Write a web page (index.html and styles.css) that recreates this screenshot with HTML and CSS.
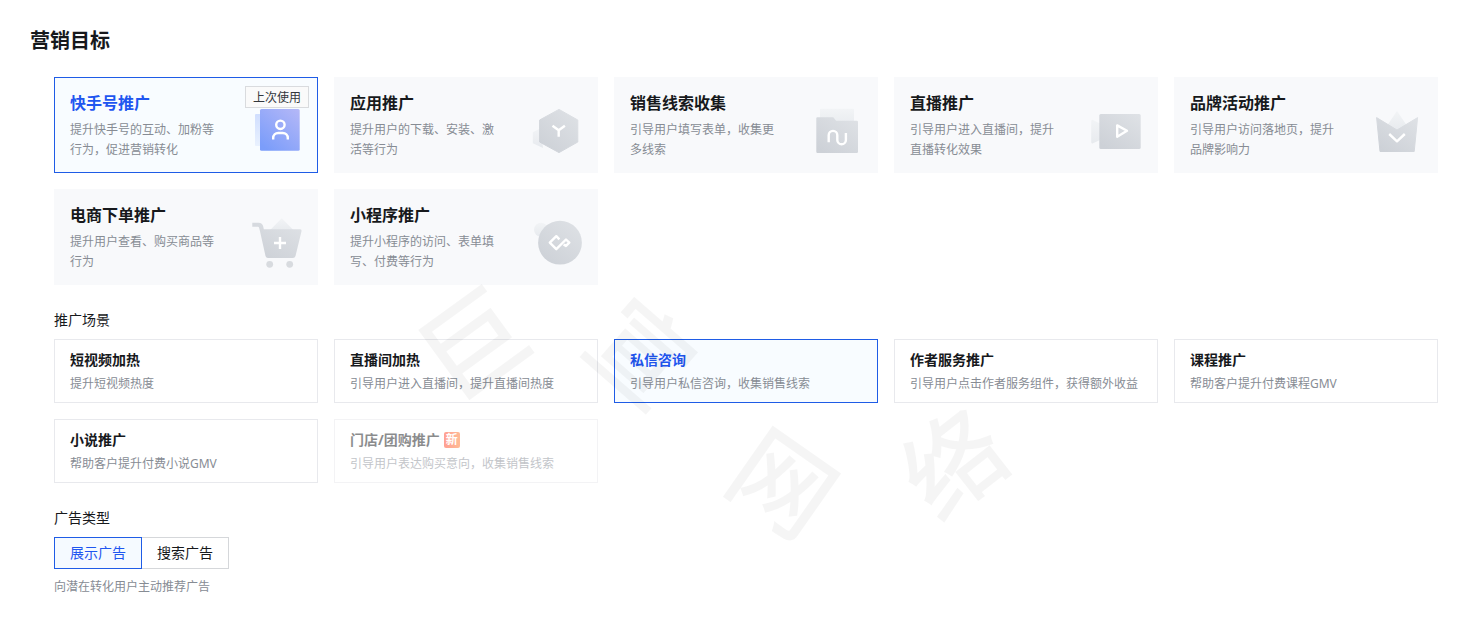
FILE: index.html
```html
<!DOCTYPE html>
<html lang="zh-CN">
<head>
<meta charset="utf-8">
<meta name="viewport" content="width=device-width, initial-scale=1">
<title>营销目标</title>
<link rel="stylesheet" href="styles.css">
</head>
<body>
<svg class="defs" width="0" height="0" aria-hidden="true">
  <defs>
    <linearGradient id="grey" x1="1" y1="0" x2="0.2" y2="1"><stop offset="0" stop-color="#dfe2e6"/><stop offset="1" stop-color="#cdd1d7"/></linearGradient>
    <linearGradient id="pale" x1="0" y1="0" x2="0" y2="1"><stop offset="0" stop-color="#f2f4f6"/><stop offset="1" stop-color="#e7eaee"/></linearGradient>
    <linearGradient id="blue" x1="1" y1="0" x2="0.2" y2="1"><stop offset="0" stop-color="#b5b8f7"/><stop offset="1" stop-color="#7b9dfa"/></linearGradient>
    <linearGradient id="sky" x1="0" y1="0" x2="0" y2="1"><stop offset="0" stop-color="#d0defe"/><stop offset="1" stop-color="#e9f1fe"/></linearGradient>
  </defs>
</svg>
<main class="page">
  <h1 class="page-title">营销目标</h1>
  <div class="content">
    <section class="grid" aria-label="营销目标">
      <button type="button" class="goal selected" aria-pressed="true">
        <span class="goal-text"><span class="goal-title">快手号推广</span><span class="desc">提升快手号的互动、加粉等行为，促进营销转化</span></span>
        <svg class="icon" viewBox="0 0 48 48" aria-hidden="true"><rect x="1" y="7" width="8" height="32" rx="1" fill="url(#sky)"/><rect x="6" y="2" width="39.7" height="41.7" rx="1.5" fill="url(#blue)"/><g class="line"><circle cx="26.4" cy="17.8" r="4.2"/><path d="M19.2 32.6V31a5 5 0 0 1 5-5h4.6a5 5 0 0 1 5 5v1.6"/></g></svg>
        <span class="tag">上次使用</span>
      </button>
      <button type="button" class="goal" aria-pressed="false">
        <span class="goal-text"><span class="goal-title">应用推广</span><span class="desc">提升用户的下载、安装、激活等行为</span></span>
        <svg class="icon" viewBox="0 0 48 48" aria-hidden="true"><path d="M7 21l-8.2 4.2v11L9 41z" fill="url(#pale)"/><path d="M25 2.4L43.8 13v22L25 45.6 5.6 35V13z" fill="url(#grey)" stroke="url(#grey)" stroke-linejoin="round"/><path class="line" d="M18.5 18.8l6.2 4.4 6.2-4.4M24.7 23v6.8"/></svg>
      </button>
      <button type="button" class="goal" aria-pressed="false">
        <span class="goal-text"><span class="goal-title">销售线索收集</span><span class="desc">引导用户填写表单，收集更多线索</span></span>
        <svg class="icon" viewBox="0 0 48 48" aria-hidden="true"><rect x="6" y="1.7" width="34" height="20" rx="1" fill="url(#pale)"/><path d="M3.3 10.3h16l2.8 3.4h20.7a1.2 1.2 0 0 1 1.2 1.2v29.9a1.2 1.2 0 0 1-1.2 1.2H3.5a1.2 1.2 0 0 1-1.2-1.2V11.3a1 1 0 0 1 1-1z" fill="url(#grey)"/><path class="line" d="M14.7 35.3V28.2a4.3 4.3 0 0 1 8.6 0v4.7a4.3 4.3 0 0 0 8.6 0v-7"/></svg>
      </button>
      <button type="button" class="goal" aria-pressed="false">
        <span class="goal-text"><span class="goal-title">直播推广</span><span class="desc">引导用户进入直播间，提升直播转化效果</span></span>
        <svg class="icon" viewBox="0 0 48 48" aria-hidden="true"><path d="M-2.8 14.2q0-2 1.8-1.1L7 17v15.5l-8 3.8q-1.8.8-1.8-1.2z" fill="url(#pale)"/><rect x="5.3" y="7" width="41.4" height="35" rx="1.5" fill="url(#grey)"/><path class="line" d="M23.2 18.4v11.4l9.8-6z"/></svg>
      </button>
      <button type="button" class="goal" aria-pressed="false">
        <span class="goal-text"><span class="goal-title">品牌活动推广</span><span class="desc">引导用户访问落地页，提升品牌影响力</span></span>
        <svg class="icon" viewBox="0 0 48 48" aria-hidden="true"><path d="M23 4l9.5 14L23 25l-9.5-7z" fill="url(#pale)"/><path d="M2.6 10.6L23 23l20.6-12.4-3.4 33.9H6z" fill="url(#grey)" stroke="url(#grey)" stroke-linejoin="round"/><path class="line" d="M15.2 27L23 34.3 30.8 27"/></svg>
      </button>
      <button type="button" class="goal" aria-pressed="false">
        <span class="goal-text"><span class="goal-title">电商下单推广</span><span class="desc">提升用户查看、购买商品等行为</span></span>
        <svg class="icon" viewBox="0 0 48 48" aria-hidden="true"><path d="M27.7-.8l13 13H15z" fill="url(#pale)"/><path d="M-1.7 3.7H4.5q4 0 4.8 4l.5 2.6h36q2.2 0 1.700 2l-6 24.600q-.5 2-2.600 2H14q-2 0-2.500-2L6 12.300 5 8.500q-.2-.8-1-.8h-5.700z" fill="url(#grey)"/><circle cx="15.7" cy="45.3" r="3.4" fill="#d8dbdf"/><circle cx="35.7" cy="45.3" r="3.4" fill="#d8dbdf"/><path class="line" d="M20 24h12M26 18v12"/></svg>
      </button>
      <button type="button" class="goal" aria-pressed="false">
        <span class="goal-text"><span class="goal-title">小程序推广</span><span class="desc">提升小程序的访问、表单填写、付费等行为</span></span>
        <svg class="icon" viewBox="0 0 48 48" aria-hidden="true"><circle cx="7" cy="10.7" r="7" fill="url(#pale)"/><circle cx="26" cy="23.7" r="21.9" fill="url(#grey)"/><path class="line" d="M25.4 20.300l-3.100-3.100-6.500 6.500 6.500 6.500 9.700-9.700 3.300 3.200-3.300 3.200-2.400-1.500"/></svg>
      </button>
    </section>

    <h2 class="label">推广场景</h2>
    <section class="grid" aria-label="推广场景">
      <button type="button" class="scene" aria-pressed="false"><span class="scene-title">短视频加热</span><span class="desc">提升短视频热度</span></button>
      <button type="button" class="scene" aria-pressed="false"><span class="scene-title">直播间加热</span><span class="desc">引导用户进入直播间，提升直播间热度</span></button>
      <button type="button" class="scene selected" aria-pressed="true"><span class="scene-title">私信咨询</span><span class="desc">引导用户私信咨询，收集销售线索</span></button>
      <button type="button" class="scene" aria-pressed="false"><span class="scene-title">作者服务推广</span><span class="desc">引导用户点击作者服务组件，获得额外收益</span></button>
      <button type="button" class="scene" aria-pressed="false"><span class="scene-title">课程推广</span><span class="desc">帮助客户提升付费课程GMV</span></button>
      <button type="button" class="scene" aria-pressed="false"><span class="scene-title">小说推广</span><span class="desc">帮助客户提升付费小说GMV</span></button>
      <button type="button" class="scene" disabled><span class="scene-title">门店/团购推广<span class="badge">新</span></span><span class="desc">引导用户表达购买意向，收集销售线索</span></button>
    </section>

    <h2 class="label">广告类型</h2>
    <div class="segment" role="group" aria-label="广告类型">
      <button type="button" class="segment-item selected" aria-pressed="true">展示广告</button>
      <button type="button" class="segment-item" aria-pressed="false">搜索广告</button>
    </div>
    <p class="hint">向潜在转化用户主动推荐广告</p>
  </div>
  <div class="watermark" aria-hidden="true">
    <span class="mark mark-1">巨</span>
    <span class="mark mark-2">宣</span>
    <span class="mark mark-3">网</span>
    <span class="mark mark-4">络</span>
  </div>
</main>
</body>
</html>
```
FILE: styles.css
```css
* {
  box-sizing: border-box;
}

body {
  margin: 0;
  background: #fff;
  color: #17191c;
  font-family: "Noto Sans", "Noto Sans CJK SC", sans-serif;
  font-size: 14px;
}

button {
  margin: 0;
  font: inherit;
  color: inherit;
  text-align: left;
  cursor: pointer;
}

.defs {
  position: absolute;
}

.page {
  position: relative;
  padding: 27px 20px 30px 30px;
}

.page-title {
  margin: 0 0 22px;
  font-size: 20px;
  line-height: 28px;
  font-weight: 700;
}

.content {
  padding-left: 24px;
}

.grid {
  display: grid;
  grid-template-columns: repeat(5, minmax(0, 1fr));
  gap: 16px;
}

.goal {
  position: relative;
  display: flex;
  justify-content: space-between;
  align-items: flex-start;
  padding: 13px 15px 12px;
  border: 1px solid transparent;
  background: #f8f9fb;
}

.goal-text {
  display: flex;
  flex-direction: column;
  gap: 5px;
  max-width: 152px;
}

.goal-title {
  font-size: 16px;
  line-height: 24px;
  font-weight: 700;
}

.desc {
  color: #878c94;
  font-size: 12px;
  line-height: 20px;
}

.icon {
  flex: none;
  width: 48px;
  height: 48px;
  margin-top: 16px;
  overflow: visible;
}

.line {
  fill: none;
  stroke: #fff;
  stroke-width: 2.4;
  stroke-linejoin: round;
}

.tag {
  position: absolute;
  top: 8px;
  right: 8px;
  padding: 1px 7px 0;
  border: 1px solid #d9dbde;
  background: #fafafa;
  color: #33373d;
  font-size: 12px;
  line-height: 19px;
}

.label {
  margin: 23px 0 7px;
  font-size: 14px;
  line-height: 24px;
  font-weight: 400;
}

.scene {
  display: flex;
  flex-direction: column;
  gap: 4px;
  padding: 10px 15px 8px;
  border: 1px solid #e8e9ed;
  background: #fff;
}

.scene:disabled {
  opacity: 0.5;
  cursor: default;
}

.scene-title {
  display: flex;
  align-items: center;
  gap: 4px;
  line-height: 20px;
  font-weight: 700;
}

.badge {
  width: 16px;
  border-radius: 2px;
  background: linear-gradient(90deg, #ff4329, #ff7a2e);
  color: #fff;
  font-size: 12px;
  line-height: 16px;
  text-align: center;
}

.goal.selected,
.scene.selected,
.segment-item.selected {
  border-color: #1f5ce6;
  background: #f8fcff;
}

.selected .goal-title,
.selected .scene-title,
.segment-item.selected {
  color: #1f56f0;
}

.segment {
  display: flex;
}

.segment-item {
  padding: 0 15px;
  border: 1px solid #d5d7da;
  background: #fff;
  line-height: 30px;
}

.segment-item + .segment-item {
  padding-left: 15px;
  border-left: 0;
}

.segment-item.selected {
  background: #f5faff;
}

.hint {
  margin: 8px 0 0;
  color: #878c94;
  font-size: 12px;
  line-height: 20px;
}

.watermark {
  position: absolute;
  inset: 0;
  overflow: hidden;
  pointer-events: none;
}

.mark {
  position: absolute;
  width: 100px;
  color: rgba(0, 0, 0, 0.04);
  font-size: 100px;
  line-height: 100px;
  font-weight: 500;
  text-align: center;
}

.mark-1 {
  left: 421px;
  top: 294px;
  font-size: 104px;
  transform: rotate(-36deg);
}

.mark-2 {
  left: 592px;
  top: 302px;
  transform: rotate(41deg);
}

.mark-3 {
  left: 734px;
  top: 432px;
  transform: rotate(35deg);
}

.mark-4 {
  left: 903px;
  top: 412px;
  transform: rotate(-38deg);
}
```
